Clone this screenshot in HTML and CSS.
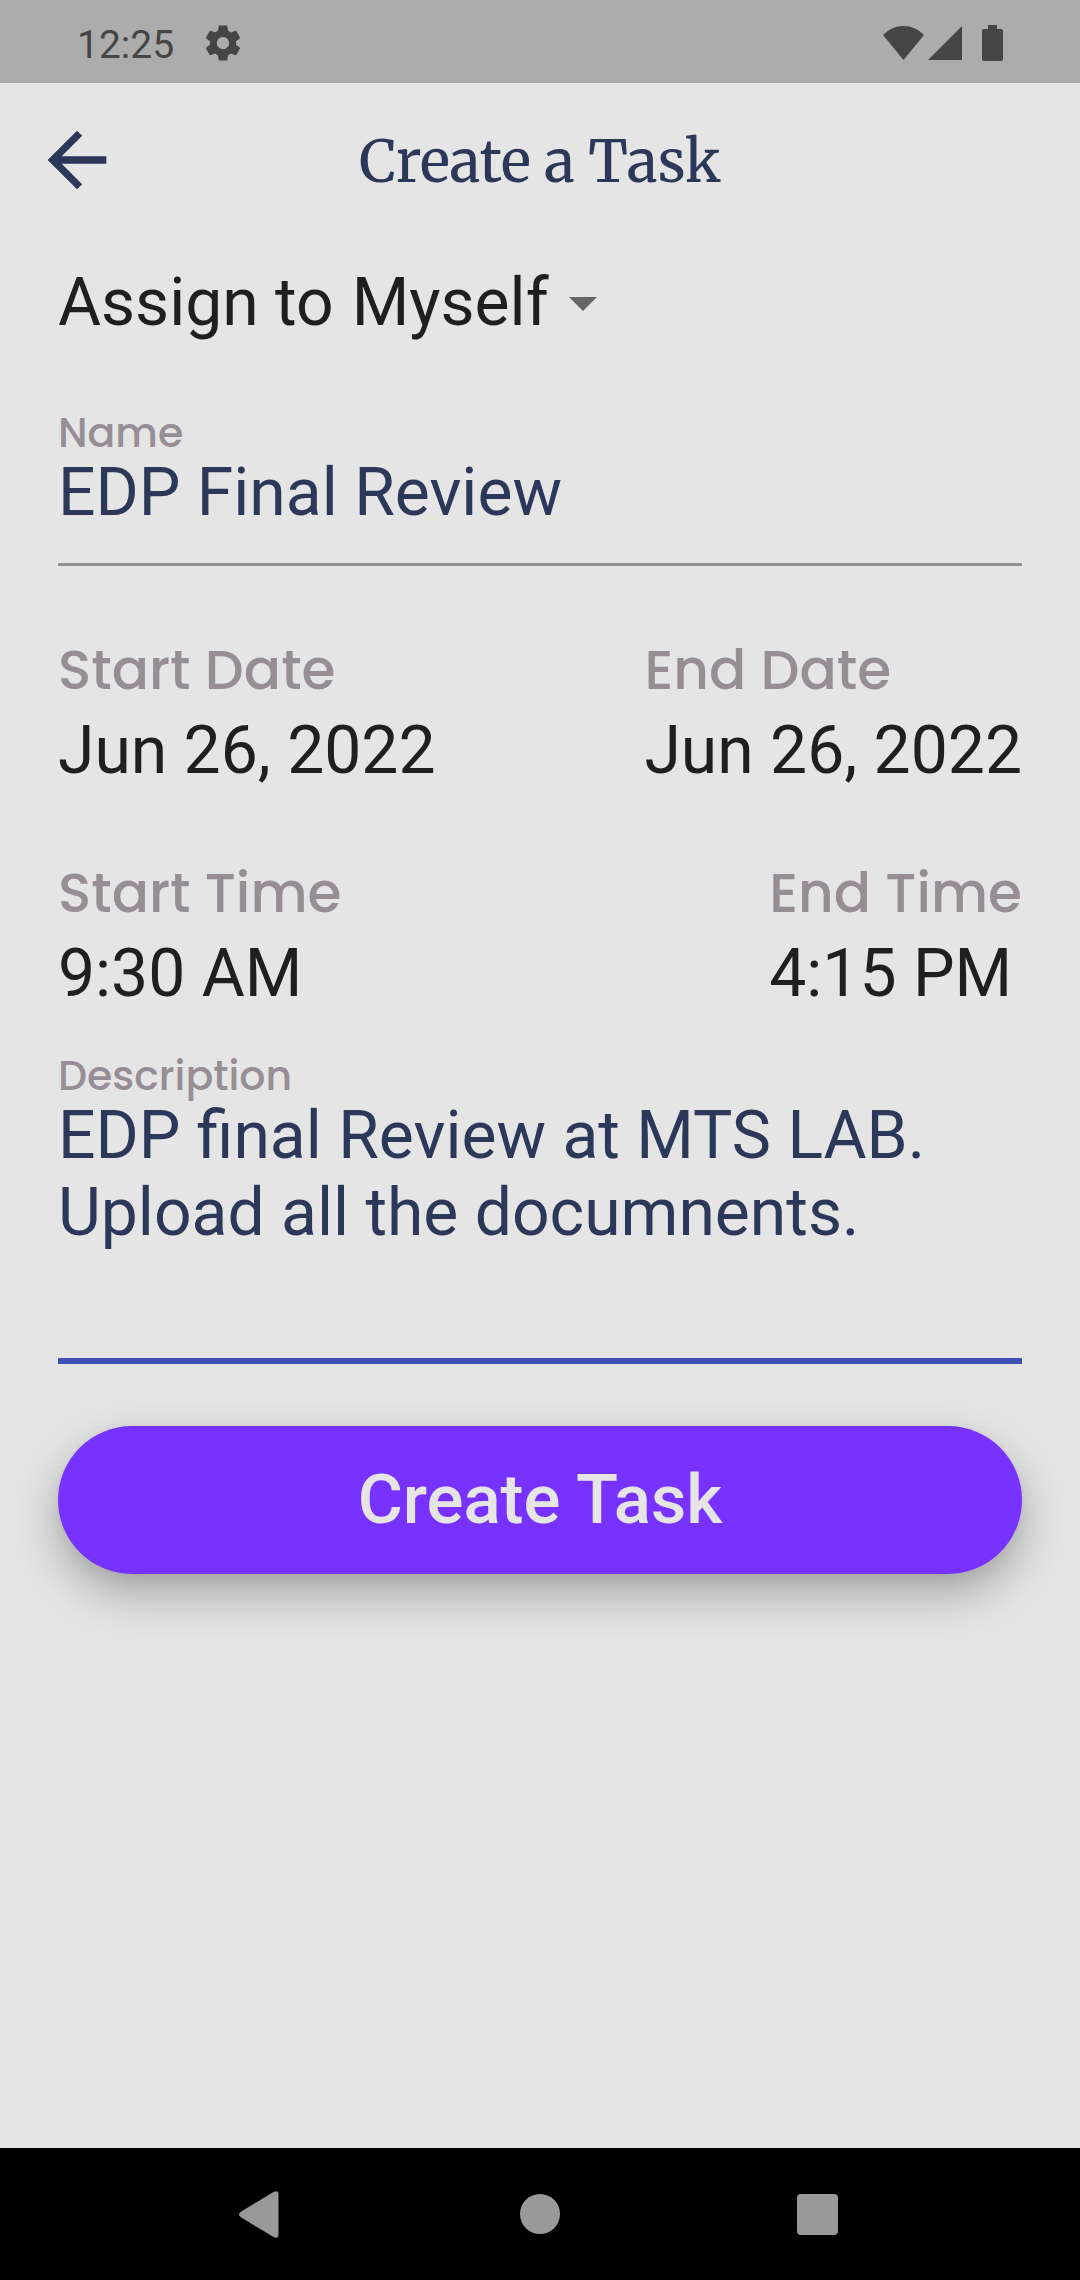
FILE: index.html
```html
<!DOCTYPE html>
<html lang="en">
<head>
<meta charset="utf-8">
<meta name="viewport" content="width=device-width, initial-scale=1">
<title>Create a Task</title>
<link rel="stylesheet" href="styles.css">
</head>
<body class="screen">
  <div class="status-bar">
    <div class="status-left">
      <span class="clock">12:25</span>
      <svg class="gear" viewBox="0 0 24 24" aria-hidden="true"><path d="M19.43 12.98c.04-.32.07-.64.07-.98s-.03-.66-.07-.98l2.11-1.65c.19-.15.24-.42.12-.64l-2-3.46c-.12-.22-.39-.3-.61-.22l-2.49 1c-.52-.4-1.08-.73-1.69-.98l-.38-2.65C14.46 2.18 14.25 2 14 2h-4c-.25 0-.46.18-.49.42l-.38 2.65c-.61.25-1.17.59-1.69.98l-2.49-1c-.23-.09-.49 0-.61.22l-2 3.46c-.13.22-.07.49.12.64l2.11 1.65c-.04.32-.07.65-.07.98s.03.66.07.98l-2.11 1.65c-.19.15-.24.42-.12.64l2 3.46c.12.22.39.3.61.22l2.49-1c.52.4 1.08.73 1.69.98l.38 2.65c.03.24.24.42.49.42h4c.25 0 .46-.18.49-.42l.38-2.65c.61-.25 1.17-.59 1.69-.98l2.49 1c.23.09.49 0 .61-.22l2-3.46c.12-.22.07-.49-.12-.64l-2.11-1.65zM12 15.5c-1.93 0-3.5-1.57-3.5-3.5s1.57-3.5 3.5-3.5 3.5 1.57 3.5 3.5-1.57 3.5-3.5 3.5z"/></svg>
    </div>
    <div class="status-right">
      <svg class="wifi" viewBox="0 0 41 34" aria-hidden="true"><path d="M20.500 34 0 9C6 3 13 0 20.500 0S35 3 41 9Z"/></svg>
      <svg class="signal" viewBox="0 0 34 34" aria-hidden="true"><path d="M34 0V34H0Z"/></svg>
      <svg class="battery" viewBox="0 0 21 36" aria-hidden="true"><path d="M6 0h9v4h4a2 2 0 0 1 2 2v28a2 2 0 0 1-2 2H2a2 2 0 0 1-2-2V6a2 2 0 0 1 2-2h4Z"/></svg>
    </div>
  </div>

  <header class="app-bar">
    <button class="back" type="button" aria-label="Back">
      <svg viewBox="0 0 24 24" aria-hidden="true"><path d="M20 11H7.830l5.590-5.590L12 4l-8 8 8 8 1.410-1.410L7.830 13H20v-2z"/></svg>
    </button>
    <h1 class="title">Create a Task</h1>
  </header>

  <main class="content">
    <form class="form">
      <div class="assign">
        <label for="assignee">Assign to</label>
        <select id="assignee"><option>Myself</option></select>
        <svg class="caret" viewBox="0 0 28 14" aria-hidden="true"><path d="M0 0h28L14 14Z"/></svg>
      </div>

      <div class="field name-field">
        <label class="small-label" for="name">Name</label>
        <input class="line-input" id="name" type="text" value="EDP Final Review">
      </div>

      <div class="pair">
        <div class="pick">
          <label for="start-date">Start Date</label>
          <button id="start-date" type="button">Jun 26, 2022</button>
        </div>
        <div class="pick">
          <label for="end-date">End Date</label>
          <button id="end-date" type="button">Jun 26, 2022</button>
        </div>
      </div>

      <div class="pair">
        <div class="pick">
          <label for="start-time">Start Time</label>
          <button id="start-time" type="button">9:30 AM</button>
        </div>
        <div class="pick">
          <label for="end-time">End Time</label>
          <button id="end-time" type="button">4:15 PM</button>
        </div>
      </div>

      <div class="field description-field">
        <label class="small-label" for="description">Description</label>
        <textarea class="line-input active" id="description" rows="3">EDP final Review at MTS LAB.
Upload all the documnents.</textarea>
      </div>

      <button class="submit" type="submit">Create Task</button>
    </form>
  </main>

  <nav class="nav-bar" aria-label="System">
    <button type="button" aria-label="Back"><svg viewBox="0 0 48 48" aria-hidden="true"><path d="M3.500 22 36.500 2q5-2 5 2v41q0 4-5 2L3.500 27q-3-2.500 0-5Z"/></svg></button>
    <button type="button" aria-label="Home"><svg viewBox="0 0 48 48" aria-hidden="true"><circle cx="24" cy="24" r="20"/></svg></button>
    <button type="button" aria-label="Recent apps"><svg viewBox="0 0 48 48" aria-hidden="true"><rect x="2" y="4" width="41" height="41" rx="4"/></svg></button>
  </nav>
</body>
</html>
```
FILE: styles.css
```css
:root {
  --surface: #e5e5e5;
  --ink: #1f1f1f;
  --navy: #2c3859;
  --muted: #978e95;
  --accent: #7832ff;
}

* {
  box-sizing: border-box;
}

.screen {
  margin: 0;
  min-height: 100vh;
  display: flex;
  flex-direction: column;
  background: var(--surface);
  color: var(--ink);
  font-family: Roboto, "Liberation Sans", sans-serif;
  font-size: 66px;
  line-height: 77px;
}

button,
input,
select,
textarea {
  margin: 0;
  padding: 0;
  border: 0;
  border-radius: 0;
  background: none;
  color: inherit;
  font: inherit;
  outline: 0;
}

svg {
  display: block;
  fill: currentColor;
}

/* Status bar */
.status-bar {
  height: 83px;
  padding: 0 77px;
  display: flex;
  align-items: center;
  justify-content: space-between;
  background: #acacac;
  color: #454545;
}

.status-left,
.status-right {
  display: flex;
  align-items: center;
}

.status-left {
  gap: 28px;
  padding-top: 3px;
}

.status-right {
  padding-top: 2px;
}

.clock {
  font-size: 39px;
  line-height: 46px;
  padding-top: 3px;
}

.gear {
  width: 42px;
  height: 42px;
}

.wifi {
  width: 41px;
  height: 34px;
}

.signal {
  width: 34px;
  height: 34px;
  margin: 0 20px 0 4px;
}

.battery {
  width: 21px;
  height: 36px;
}

/* App bar */
.app-bar {
  height: 154px;
  padding: 0 33px;
  display: grid;
  grid-template-columns: 88px 1fr 88px;
  align-items: center;
  color: var(--navy);
}

.back svg {
  width: 88px;
  height: 88px;
}

.title {
  margin: 0;
  padding-top: 4px;
  text-align: center;
  font-family: Merriweather, "Liberation Serif", serif;
  font-size: 57px;
  font-weight: 400;
}

/* Form */
.content {
  flex: 1;
  padding: 27px 58px 64px;
}

.form,
.field,
.pick {
  display: flex;
  flex-direction: column;
}

.assign {
  display: flex;
  align-items: center;
  gap: 18px;
}

.assign select {
  appearance: none;
}

.caret {
  width: 28px;
  height: 14px;
  margin: 2px 0 0 2px;
  color: #666;
}

.name-field {
  margin-top: 71px;
}

.small-label,
.pick label {
  color: var(--muted);
  font-family: Poppins, Inter, sans-serif;
  font-weight: 500;
}

.small-label {
  font-size: 41px;
  line-height: 42px;
}

.line-input {
  width: 100%;
  color: var(--navy);
  border-bottom: 3px solid #929292;
}

input.line-input {
  height: 112px;
  padding-bottom: 32px;
}

textarea.line-input {
  display: block;
  height: 267px;
  resize: none;
  overflow: hidden;
}

.line-input.active {
  border-bottom: 6px solid #3f51b5;
}

.pair {
  margin-top: 74px;
  display: flex;
  justify-content: space-between;
}

.pick {
  gap: 12px;
}

.pick label {
  font-size: 55px;
  line-height: 60px;
}

.pick button {
  text-align: left;
}

.description-field {
  margin-top: 43px;
}

.submit {
  height: 148px;
  margin-top: 62px;
  padding-bottom: 2px;
  border-radius: 74px;
  background: var(--accent);
  color: var(--surface);
  font-size: 69px;
  font-weight: 500;
  box-shadow: 0 20px 48px rgba(0, 0, 0, 0.28), 0 4px 16px rgba(0, 0, 0, 0.06);
}

/* System navigation */
.nav-bar {
  height: 132px;
  padding: 0 122px;
  display: grid;
  grid-template-columns: repeat(3, 1fr);
  place-items: center;
  background: #000;
  color: #999;
}

.nav-bar svg {
  width: 48px;
  height: 48px;
}
```
